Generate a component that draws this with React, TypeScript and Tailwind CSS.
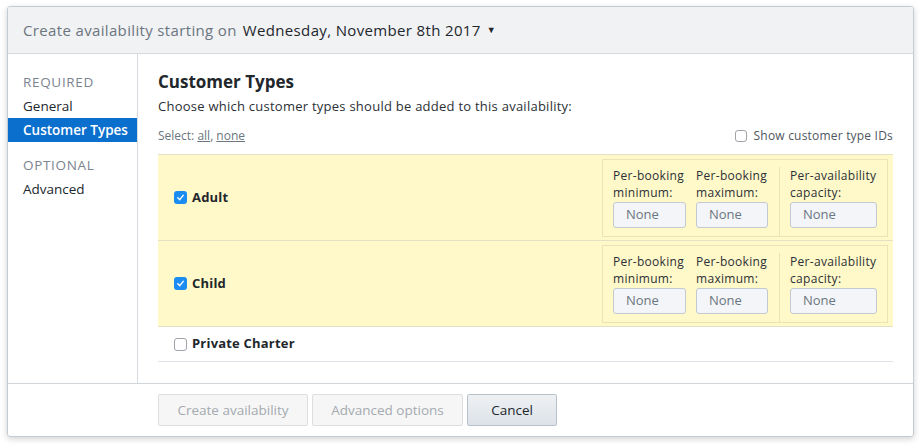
const font = { fontFamily: '"Open Sans", "Noto Sans", sans-serif' };

const NumberBox = ({ label1, label2, kind }: { label1: string; label2: string; kind: "first" | "second" | "third" }) => {
  const wrap =
    kind === "first"
      ? "w-[87px] pl-[10px]"
      : kind === "second"
      ? "w-[89px] pl-[6px]"
      : "w-[108px] pl-[10px] border-l border-[#ebe3b3]";
  const input = kind === "first" ? "w-[73px]" : kind === "second" ? "w-[72px]" : "w-[87px]";
  return (
    <div className={wrap}>
      <div className="text-[12px] leading-[17px] tracking-[0.3px] text-[#2b3036] whitespace-nowrap">
        <div>{label1}</div>
        <div>{label2}</div>
      </div>
      <div
        className={`mt-[1px] h-[26px] ${input} bg-[#f3f5f8] border border-[#c2c9d1] rounded-[3px] flex items-center pl-[12px] text-[13px] text-[#6b7580]`}
      >
        None
      </div>
    </div>
  );
};

const Check = ({ checked }: { checked?: boolean }) =>
  checked ? (
    <span className="w-[13px] h-[13px] rounded-[3px] bg-[#1b8df2] flex items-center justify-center">
      <svg width="9" height="9" viewBox="0 0 10 10">
        <path d="M2 5.3 L4.2 7.4 L8 2.6" stroke="white" strokeWidth="1.6" fill="none" strokeLinecap="round" strokeLinejoin="round" />
      </svg>
    </span>
  ) : (
    <span className="w-[13px] h-[13px] rounded-[3px] bg-white border border-[#9ea4aa]" />
  );

const TypeRow = ({ name }: { name: string }) => (
  <div className="flex items-center justify-between h-[86px] bg-[#fff8c9] border-b border-[#e4e0c4] pr-[5px]">
    <div className="flex items-center pl-[16px] gap-[5px]">
      <Check checked />
      <span className="text-[13px] font-bold text-[#22272c] tracking-[0.2px]">{name}</span>
    </div>
    <div className="flex h-[78px] border border-[#ebe3b3] pt-[7px]">
      <NumberBox label1="Per-booking" label2="minimum:" kind="first" />
      <NumberBox label1="Per-booking" label2="maximum:" kind="second" />
      <NumberBox label1="Per-availability" label2="capacity:" kind="third" />
    </div>
  </div>
);

export default function App() {
  return (
    <div className="w-[921px] h-[448px] bg-white pt-[6px] pl-[7px]" style={font}>
      <div className="w-[907px] h-[431px] border border-[#c5cbd2] rounded-[3px] shadow-[0_2px_6px_rgba(0,0,0,0.18)] flex flex-col overflow-hidden">
        {/* Header */}
        <header className="h-[47px] bg-[#f1f2f4] border-b border-[#d6dade] flex items-center pl-[15px] text-[15px] tracking-[0.35px] shrink-0">
          <span className="text-[#6b7580]">Create availability starting on</span>
          <span className="ml-[6px] text-[#22272c]">Wednesday, November 8th 2017</span>
          <span className="ml-[6px] text-[9px] text-[#22272c]">▼</span>
        </header>

        <div className="flex flex-1">
          {/* Sidebar */}
          <aside className="w-[130px] border-r border-[#d6dade] pt-[16px] shrink-0 text-[13.5px]">
            <div className="h-[24px] flex items-center pl-[15px] tracking-[0.05em] text-[#7b8490]">REQUIRED</div>
            <div className="h-[24px] flex items-center pl-[15px] text-[#22272c]">General</div>
            <div className="h-[24px] flex items-center pl-[15px] font-semibold text-white bg-[#0b6fce]">Customer Types</div>
            <div className="h-[24px] mt-[11px] flex items-center pl-[15px] tracking-[0.05em] text-[#7b8490]">OPTIONAL</div>
            <div className="h-[24px] flex items-center pl-[15px] text-[#22272c]">Advanced</div>
          </aside>

          {/* Main */}
          <main className="flex-1 px-[20px] pt-[16px]">
            <h2 className="text-[17px] font-bold text-[#22272c] leading-[24px]">Customer Types</h2>
            <p className="mt-[2px] text-[13px] tracking-[0.25px] text-[#2b3036] leading-[20px]">
              Choose which customer types should be added to this availability:
            </p>
            <div className="flex items-center justify-between mt-[11px] h-[18px] text-[12px]">
              <div className="text-[#6b7580]">
                Select: <span className="underline">all</span>, <span className="underline">none</span>
              </div>
              <div className="flex items-center gap-[7px] text-[#4f5760] tracking-[0.2px]">
                <span className="w-[12px] h-[12px] rounded-[3px] border border-[#9ea4aa] bg-white" />
                Show customer type IDs
              </div>
            </div>

            <div className="mt-[9px] border-t border-[#e4e0c4]">
              <TypeRow name="Adult" />
              <TypeRow name="Child" />
              <div className="flex items-center h-[35px] border-b border-[#dfe2e6] pl-[16px] gap-[5px]">
                <Check />
                <span className="text-[13px] font-bold text-[#22272c] tracking-[0.2px]">Private Charter</span>
              </div>
            </div>
          </main>
        </div>

        {/* Footer */}
        <footer className="h-[53px] border-t border-[#d0d5da] flex items-start pt-[10px] pl-[150px] gap-[4px] shrink-0 text-[13.5px]">
          <button className="h-[32px] w-[150px] bg-[#f6f6f6] border border-[#dcdfe2] rounded-[2px] text-[#a4aab0]">
            Create availability
          </button>
          <button className="h-[32px] w-[151px] bg-[#f6f6f6] border border-[#dcdfe2] rounded-[2px] text-[#a4aab0]">
            Advanced options
          </button>
          <button className="h-[32px] w-[90px] bg-gradient-to-b from-[#eef1f4] to-[#dce2e8] border border-[#b8c1ca] rounded-[2px] text-[#22272c]">
            Cancel
          </button>
        </footer>
      </div>
    </div>
  );
}
